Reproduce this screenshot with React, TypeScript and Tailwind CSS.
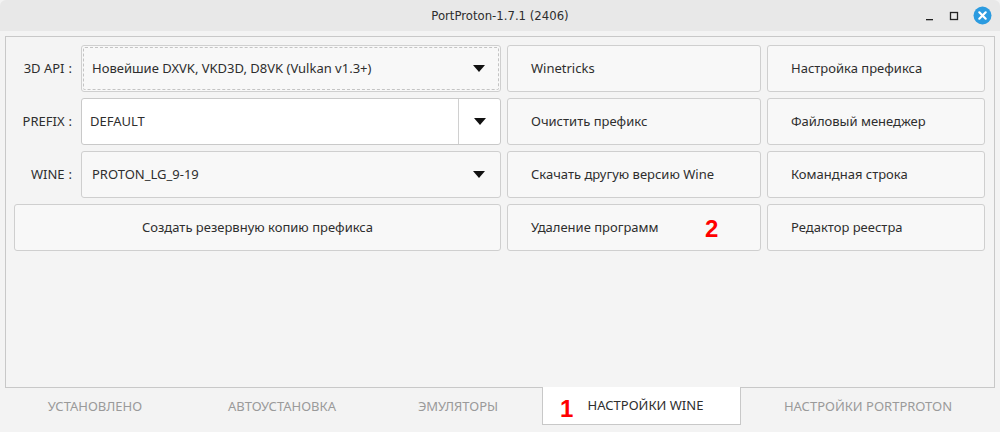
import React from "react";

const font = { fontFamily: '"Noto Sans", "Open Sans", sans-serif' };

function Arrow() {
  return (
    <svg width="12" height="7" viewBox="0 0 12 7" className="shrink-0">
      <path d="M0 0 L12 0 L6 7 Z" fill="#111" />
    </svg>
  );
}

function Combo({ value, focused, editable }: { value: string; focused?: boolean; editable?: boolean }) {
  if (editable) {
    return (
      <div className="flex h-[47px] rounded-[3px] border border-[#c9c9c9] bg-white">
        <div className="flex flex-1 items-center pl-[8px] text-[13px] text-[#2e2e2e]">{value}</div>
        <div className="flex w-[42px] items-center justify-center border-l border-[#d0d0d0]">
          <Arrow />
        </div>
      </div>
    );
  }
  return (
    <div className="h-[47px] rounded-[3px] border border-[#cfcfcf] bg-[#f8f8f8] p-px">
      <div
        className={`flex h-full items-center justify-between rounded-[2px] pl-[8px] pr-[13px] text-[13px] text-[#2e2e2e] ${
          focused ? "border border-dashed border-[#c4c4c4]" : "border border-transparent"
        }`}
      >
        <span>{value}</span>
        <Arrow />
      </div>
    </div>
  );
}

function Btn({ children, center }: { children: React.ReactNode; center?: boolean }) {
  return (
    <div
      className={`relative flex h-[47px] items-center rounded-[3px] border border-[#cfcfcf] bg-[#f8f8f8] text-[13px] text-[#2e2e2e] ${
        center ? "justify-center" : "pl-[23px]"
      }`}
    >
      {children}
    </div>
  );
}

function Label({ children }: { children: React.ReactNode }) {
  return (
    <div className="flex items-center justify-end gap-[4px] pr-[3px] text-[13px] text-[#2e2e2e]">
      <span>{children}</span>
      <span>:</span>
    </div>
  );
}

const redNum = { fontFamily: '"Liberation Sans", Arial, sans-serif' };

export default function App() {
  const tabs = [
    { name: "УСТАНОВЛЕНО", w: "w-[190px]" },
    { name: "АВТОУСТАНОВКА", w: "w-[184px]" },
    { name: "ЭМУЛЯТОРЫ", w: "w-[168px]" },
    { name: "НАСТРОЙКИ WINE", w: "w-[199px]", active: true },
    { name: "НАСТРОЙКИ PORTPROTON", w: "flex-1" },
  ];

  return (
    <div className="h-[432px] w-[1000px] overflow-hidden bg-[#f3f3f3]" style={font}>
      {/* Title bar */}
      <div className="relative flex h-[31px] items-center justify-center rounded-t-[6px] bg-[#e8e8e8]">
        <span
          className="text-[13px] text-[#2d2d2d]"
          style={{ fontFamily: '"DejaVu Sans Condensed", "DejaVu Sans", sans-serif', fontStretch: "condensed" }}
        >
          PortProton-1.7.1 (2406)
        </span>
        <div className="absolute right-[8px] top-[6px] flex items-center gap-[14px]">
          <svg width="10" height="10" viewBox="0 0 10 10">
            <rect x="1" y="8" width="7" height="1.3" fill="#222" />
          </svg>
          <svg width="10" height="10" viewBox="0 0 10 10">
            <rect x="1.5" y="1.5" width="7" height="7" fill="none" stroke="#222" strokeWidth="1.3" />
          </svg>
          <svg width="19" height="19" viewBox="0 0 19 19">
            <circle cx="9.5" cy="9.5" r="9" fill="#2b9be0" />
            <path d="M6.3 6.3 L12.7 12.7 M12.7 6.3 L6.3 12.7" stroke="#fff" strokeWidth="2.2" strokeLinecap="round" />
          </svg>
        </div>
      </div>

      {/* Main panel */}
      <div className="mx-[5px] mt-[5px] h-[352px] border border-[#c8c8c8] bg-[#f4f4f4] pl-[8px] pr-[9px] pt-[8px]">
        <div className="grid grid-cols-[61px_420px_254px_218px] gap-x-[6px] gap-y-[6px]">
          <Label>3D API</Label>
          <Combo value="Новейшие DXVK, VKD3D, D8VK (Vulkan v1.3+)" focused />
          <Btn>Winetricks</Btn>
          <Btn>Настройка префикса</Btn>

          <Label>PREFIX</Label>
          <Combo value="DEFAULT" editable />
          <Btn>Очистить префикс</Btn>
          <Btn>Файловый менеджер</Btn>

          <Label>WINE</Label>
          <Combo value="PROTON_LG_9-19" />
          <Btn>Скачать другую версию Wine</Btn>
          <Btn>Командная строка</Btn>

          <div className="col-span-2">
            <Btn center>Создать резервную копию префикса</Btn>
          </div>
          <Btn>
            Удаление программ
            <span
              className="absolute left-[197px] top-[12px] text-[24px] font-bold leading-none text-[#ff0000]"
              style={redNum}
            >
              2
            </span>
          </Btn>
          <Btn>Редактор реестра</Btn>
        </div>
      </div>

      {/* Tabs */}
      <div className="flex h-[37px] pr-[5px]">
        {tabs.map((t) =>
          t.active ? (
            <div
              key={t.name}
              className={`${t.w} relative -mt-px flex items-center justify-center border-x border-b border-[#c8c8c8] bg-white pl-[8px] text-[13px] text-[#2e2e2e]`}
            >
              <span
                className="absolute left-[17px] top-[10px] text-[24px] font-bold leading-none text-[#ff0000]"
                style={redNum}
              >
                1
              </span>
              {t.name}
            </div>
          ) : (
            <div key={t.name} className={`${t.w} flex items-center justify-center text-[13px] text-[#9a9a9a]`}>
              {t.name}
            </div>
          )
        )}
      </div>
    </div>
  );
}
